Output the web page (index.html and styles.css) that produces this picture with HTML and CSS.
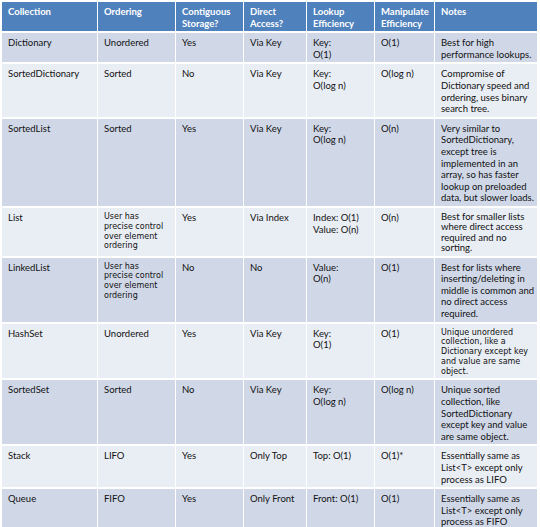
FILE: index.html
```html
<!DOCTYPE html>
<html lang="en">
<head>
    <meta charset="UTF-8">
    <meta name="viewport" content="width=device-width, initial-scale=1.0">
    <title>.NET Collections Compared</title>
    <link rel="stylesheet" href="styles.css">
</head>
<body>
    <table class="compare">
        <colgroup>
            <col class="c-name">
            <col class="c-order">
            <col class="c-store">
            <col class="c-access">
            <col class="c-lookup">
            <col class="c-manip">
            <col class="c-notes">
        </colgroup>
        <thead>
            <tr>
                <th>Collection</th>
                <th>Ordering</th>
                <th>Contiguous Storage?</th>
                <th>Direct Access?</th>
                <th>Lookup Efficiency</th>
                <th>Manipulate Efficiency</th>
                <th class="notes">Notes</th>
            </tr>
        </thead>
        <tbody>
            <tr>
                <td>Dictionary</td>
                <td>Unordered</td>
                <td>Yes</td>
                <td>Via Key</td>
                <td>Key:<br>O(1)</td>
                <td>O(1)</td>
                <td class="notes">Best for high performance lookups.</td>
            </tr>
            <tr>
                <td>SortedDictionary</td>
                <td>Sorted</td>
                <td>No</td>
                <td>Via Key</td>
                <td>Key:<br>O(log n)</td>
                <td>O(log n)</td>
                <td class="notes">Compromise of Dictionary speed and ordering, uses binary search tree.</td>
            </tr>
            <tr>
                <td>SortedList</td>
                <td>Sorted</td>
                <td>Yes</td>
                <td>Via Key</td>
                <td>Key:<br>O(log n)</td>
                <td>O(n)</td>
                <td class="notes">Very similar to SortedDictionary, except tree is implemented in an array, so has faster lookup on preloaded data, but slower loads.</td>
            </tr>
            <tr>
                <td>List</td>
                <td class="small">User has precise control over element ordering</td>
                <td>Yes</td>
                <td>Via Index</td>
                <td>Index: O(1)<br>Value: O(n)</td>
                <td>O(n)</td>
                <td class="notes tight">Best for smaller lists where direct access required and no sorting.</td>
            </tr>
            <tr>
                <td>LinkedList</td>
                <td class="small">User has precise control over element ordering</td>
                <td>No</td>
                <td>No</td>
                <td>Value:<br>O(n)</td>
                <td>O(1)</td>
                <td class="notes">Best for lists where inserting/deleting in middle is common and no direct access required.</td>
            </tr>
            <tr>
                <td>HashSet</td>
                <td>Unordered</td>
                <td>Yes</td>
                <td>Via Key</td>
                <td>Key:<br>O(1)</td>
                <td>O(1)</td>
                <td class="notes small">Unique unordered collection, like a Dictionary except key and value are same object.</td>
            </tr>
            <tr>
                <td>SortedSet</td>
                <td>Sorted</td>
                <td>No</td>
                <td>Via Key</td>
                <td>Key:<br>O(log n)</td>
                <td>O(log n)</td>
                <td class="notes">Unique sorted collection, like SortedDictionary except key and value are same object.</td>
            </tr>
            <tr>
                <td>Stack</td>
                <td>LIFO</td>
                <td>Yes</td>
                <td>Only Top</td>
                <td>Top: O(1)</td>
                <td>O(1)*</td>
                <td class="notes">Essentially same as List&lt;T&gt; except only process as LIFO</td>
            </tr>
            <tr>
                <td>Queue</td>
                <td>FIFO</td>
                <td>Yes</td>
                <td>Only Front</td>
                <td>Front: O(1)</td>
                <td>O(1)</td>
                <td class="notes">Essentially same as List&lt;T&gt; except only process as FIFO</td>
            </tr>
        </tbody>
    </table>
</body>
</html>
```

FILE: styles.css
```css
:root {
    --head-bg: #4f81bd;
    --row-dark: #d0d8e8;
    --row-light: #e9edf4;
    --text: #111;
}

body {
    margin: 0;
    background: white;
    color: var(--text);
    font-family: Lato, "Liberation Sans", sans-serif;
}

.compare {
    table-layout: fixed;
    width: 537px;
    margin-left: 1px;
    border-collapse: separate;
    border-spacing: 1px 2px;
    font-size: 9.5px;
    line-height: 11.6px;
}

.c-name { width: 95px; }
.c-order { width: 77px; }
.c-store { width: 67px; }
.c-access { width: 62px; }
.c-lookup { width: 67px; }
.c-manip { width: 59px; }
.c-notes { width: 102px; }

th,
td {
    padding: 4px 6px 2px 6px;
    text-align: left;
    vertical-align: top;
}

th {
    background: var(--head-bg);
    color: white;
    font-weight: bold;
    padding-top: 4px;
    height: 23px;
}

th.notes,
td.notes {
    padding-right: 0;
}

tbody tr:nth-child(odd) td {
    background: var(--row-dark);
}

tbody tr:nth-child(even) td {
    background: var(--row-light);
}

/* cells pasted in from another font */
.small {
    font-family: "DejaVu Sans", Verdana, sans-serif;
    font-size: 8px;
    line-height: 9.8px;
}

.tight {
    line-height: 10.4px;
}
```
